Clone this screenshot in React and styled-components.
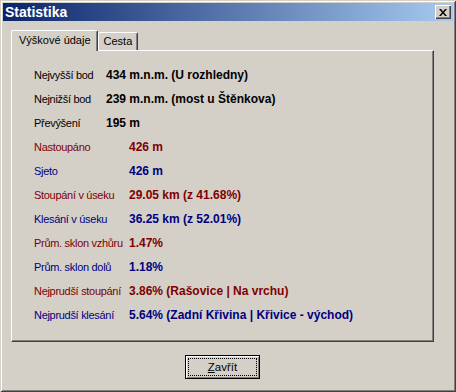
import React from "react";
import styled, { createGlobalStyle } from "styled-components";

const Global = createGlobalStyle`
  html, body { margin:0; padding:0; background:#D4D0C8; }
  body { font-family:"Liberation Sans", Arial, sans-serif; font-size:11px; }
`;

const Window = styled.div`
  width:456px; height:392px; box-sizing:border-box; background:#D4D0C8;
  display:flex; flex-direction:column; padding:3px;
  box-shadow: inset 1px 1px 0 #D4D0C8, inset -1px -1px 0 #404040,
              inset 2px 2px 0 #fff, inset -2px -2px 0 #808080;
`;
const TitleBar = styled.div`
  height:18px; display:flex; align-items:center; padding:0 2px 0 2px;
  background:linear-gradient(to right, #0A246A, #A6CAF0);
  color:#fff; font-weight:700; font-size:14px;
`;
const Title = styled.span` flex:1; `;
const CloseBtn = styled.div`
  width:16px; height:14px; box-sizing:border-box; background:#D4D0C8;
  display:flex; align-items:center; justify-content:center;
  box-shadow: inset 1px 1px 0 #fff, inset -1px -1px 0 #404040, inset -2px -2px 0 #808080;
`;
const Body = styled.div` flex:1; display:flex; flex-direction:column; padding:9px 19px 0 8px; `;
const Tabs = styled.div` display:flex; align-items:flex-end; height:20px; padding-left:1px; `;
const Tab = styled.div`
  height:${p => p.$active ? 21 : 18}px; box-sizing:border-box;
  padding:${p => p.$active ? "3px 6px 0 7px" : "2px 5px 0 5px"};
  margin:${p => p.$active ? "0 0 -1px -1px" : "0"};
  position:relative; z-index:${p => p.$active ? 2 : 1};
  background:#D4D0C8; color:#000; font-size:11px; font-weight:400;
  border-top:1px solid #fff; border-left:1px solid #fff;
  border-right:1px solid #404040; border-radius:2px 2px 0 0;
  box-shadow: inset -1px 0 0 #808080;
`;
const Panel = styled.div`
  height:292px; box-sizing:border-box; padding:12px 0 0 22px;
  border-top:1px solid #fff; border-left:1px solid #fff;
  border-right:1px solid #404040; border-bottom:1px solid #404040;
  box-shadow: inset -1px -1px 0 #808080;
  display:flex; flex-direction:column;
`;
const Row = styled.div`
  height:24px; display:grid; grid-template-columns:${p => p.$col}px auto; align-items:center;
  color:${p => p.$color};
`;
const Label = styled.span` letter-spacing:-0.3px; white-space:nowrap; `;
const Value = styled.span` font-weight:700; font-size:12px; white-space:nowrap; `;
const Footer = styled.div` flex:1; display:flex; justify-content:center; padding-top:13px; `;
const Button = styled.div`
  width:75px; height:24px; box-sizing:border-box; padding:3px;
  box-shadow: inset 0 0 0 1px #000, inset 2px 2px 0 #fff, inset -2px -2px 0 #808080;
  background:#D4D0C8;
`;
const Focus = styled.div`
  height:100%; box-sizing:border-box; border:1px dotted #000;
  display:flex; align-items:center; justify-content:center; font-size:11.5px; color:#000;
  u { text-decoration:underline; }
`;

const RED = "#800000";
const BLUE = "#000080";
const rows = [
  ["Nejvyšší bod", "434 m.n.m. (U rozhledny)", "#000", 72],
  ["Nejnižší bod", "239 m.n.m. (most u Štěnkova)", "#000", 72],
  ["Převýšení", "195 m", "#000", 72],
  ["Nastoupáno", "426 m", RED, 95],
  ["Sjeto", "426 m", BLUE, 95],
  ["Stoupání v úseku", "29.05 km (z 41.68%)", RED, 95],
  ["Klesání v úseku", "36.25 km (z 52.01%)", BLUE, 95],
  ["Prům. sklon vzhůru", "1.47%", RED, 95],
  ["Prům. sklon dolů", "1.18%", BLUE, 95],
  ["Nejprudší stoupání", "3.86% (Rašovice | Na vrchu)", RED, 95],
  ["Nejprudší klesání", "5.64% (Zadní Křivina | Křivice - východ)", BLUE, 95],
];

export default function App() {
  return (
    <>
      <Global />
      <Window>
        <TitleBar>
          <Title>Statistika</Title>
          <CloseBtn>
            <svg width="8" height="7" viewBox="0 0 8 7">
              <path d="M0 0h2l2 2.5L6 0h2L5 3.5 8 7H6L4 4.5 2 7H0l3-3.5z" fill="#000" />
            </svg>
          </CloseBtn>
        </TitleBar>
        <Body>
          <Tabs>
            <Tab $active>Výškové údaje</Tab>
            <Tab>Cesta</Tab>
          </Tabs>
          <Panel>
            {rows.map(([l, v, c, col]) => (
              <Row key={l} $color={c} $col={col}>
                <Label>{l}</Label>
                <Value>{v}</Value>
              </Row>
            ))}
          </Panel>
          <Footer>
            <Button>
              <Focus><span><u>Z</u>avřít</span></Focus>
            </Button>
          </Footer>
        </Body>
      </Window>
    </>
  );
}
